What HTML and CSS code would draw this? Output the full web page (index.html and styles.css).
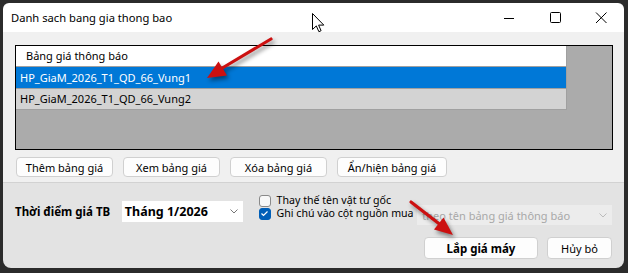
FILE: index.html
```html
<!DOCTYPE html>
<html lang="vi">
  <head>
    <meta charset="utf-8">
    <title>Danh sach bang gia thong bao</title>
    <link rel="stylesheet" href="styles.css">
  </head>
  <body>
    <div class="window">
      <header class="titlebar">
        <span class="title">Danh sach bang gia thong bao</span>
        <div class="controls">
          <span class="ctl">
            <svg width="12" height="12" viewBox="0 0 12 12"><path d="M1 6.5h10" stroke="#000" stroke-width="1"/></svg>
          </span>
          <span class="ctl">
            <svg width="12" height="12" viewBox="0 0 12 12"><rect x="1.5" y="0.5" width="10" height="10" rx="1" fill="none" stroke="#000" stroke-width="1"/></svg>
          </span>
          <span class="ctl">
            <svg width="12" height="12" viewBox="0 0 12 12"><path d="M1 0.5l10.5 10.5M11.5 0.5L1 11" stroke="#000" stroke-width="1"/></svg>
          </span>
        </div>
      </header>

      <section class="upper">
        <div class="list">
          <div class="row head">Bảng giá thông báo</div>
          <div class="row selected">HP_GiaM_2026_T1_QD_66_Vung1</div>
          <div class="row">HP_GiaM_2026_T1_QD_66_Vung2</div>
        </div>
        <div class="actions">
          <button class="btn w97">Thêm bảng giá</button>
          <button class="btn w97">Xem bảng giá</button>
          <button class="btn w97">Xóa bảng giá</button>
          <button class="btn w110">Ẩn/hiện bảng giá</button>
        </div>
      </section>

      <section class="lower">
        <div class="options">
          <span class="label">Thời điểm giá TB</span>
          <div class="select">
            <span>Tháng 1/2026</span>
            <svg width="8" height="5" viewBox="0 0 8 5"><path d="M0.5 0.5L4 4L7.5 0.5" fill="none" stroke="#777" stroke-width="1"/></svg>
          </div>
          <div class="checks">
            <div class="check"><span class="box"></span>Thay thế tên vật tư gốc</div>
            <div class="check"><span class="box on">
              <svg width="9" height="9" viewBox="0 0 9 9"><path d="M1.5 4.5L3.5 6.5L7.5 2.5" fill="none" stroke="#fff" stroke-width="1.2"/></svg>
            </span>Ghi chú vào cột nguồn mua</div>
          </div>
          <div class="combo">
            <span>theo tên bảng giá thông báo</span>
            <svg width="8" height="5" viewBox="0 0 8 5"><path d="M0.5 0.5L4 4L7.5 0.5" fill="none" stroke="#bbb" stroke-width="1"/></svg>
          </div>
        </div>
        <div class="footer-btns">
          <button class="btn big bold">Lắp giá máy</button>
          <button class="btn small">Hủy bỏ</button>
        </div>
      </section>
    </div>

    <!-- annotations drawn on top of the screenshot -->
    <svg class="overlay" width="628" height="273" viewBox="0 0 628 273">
      <g class="arrow">
        <path d="M271 39L219 70" stroke="#cc1010" stroke-width="3.2" stroke-linecap="round"/>
        <polygon points="207,78 218.5,61.5 227,75.5" fill="#cc1010"/>
        <path d="M411 202L442 226" stroke="#cc1010" stroke-width="3.2" stroke-linecap="round"/>
        <polygon points="453,235 434,229.5 443.5,217.5" fill="#cc1010"/>
      </g>
      <path class="cursor" d="M312.5 13.5v16l3.8-3.6 2.6 5.8 2.2-1-2.5-5.6h5.2z" fill="#fff" stroke="#000" stroke-width="1"/>
    </svg>
  </body>
</html>
```

FILE: styles.css
```css
html {
  font-family: "Noto Sans", "Open Sans", sans-serif;
  font-size: 11px;
}

body {
  margin: 0;
  width: 628px;
  height: 273px;
  background-color: #2b2b2b;
  position: relative;
  overflow: hidden;
}

.window {
  position: absolute;
  left: 3px;
  top: 3px;
  width: 621px;
  height: 265px;
  border-radius: 6px 6px 8px 8px;
  overflow: hidden;
  display: flex;
  flex-direction: column;
}

.titlebar {
  height: 29px;
  background-color: #fff;
  display: flex;
  align-items: center;
  justify-content: space-between;
}

.title {
  margin-left: 8px;
  color: #000;
  font-size: 11.2px;
}

.controls {
  display: flex;
  height: 100%;
}

.ctl {
  width: 46px;
  display: flex;
  align-items: center;
  justify-content: center;
}

.upper {
  background-color: #f0f0f0;
  height: 151px;
  padding: 13px 0 0 12px;
  box-sizing: border-box;
  border-bottom: 1px solid #d2d2d2;
}

.list {
  width: 598px;
  height: 105px;
  box-sizing: border-box;
  border: 1px solid #000;
  background-color: #ababab;
}

.row {
  width: 551px;
  height: 21px;
  box-sizing: border-box;
  border-bottom: 1px solid #a0a0a0;
  border-right: 1px solid #a0a0a0;
  background-color: #d3d3d3;
  padding-left: 4px;
  line-height: 20px;
  white-space: nowrap;
}

.row.head {
  height: 21px;
  background-color: #fff;
  padding-left: 10px;
}

.row.selected {
  height: 22px;
  background-color: #0078d7;
  color: #fff;
  line-height: 21px;
}

.actions {
  display: flex;
  gap: 10px;
  margin: 7px 0 0 1px;
}

.btn {
  font-family: inherit;
  font-size: 11px;
  height: 20px;
  padding: 0;
  background-color: #fdfdfd;
  border: 1px solid #d0d0d0;
  border-radius: 4px;
  color: #000;
}

.w97 { width: 97px; }
.w110 { width: 110px; }

.lower {
  flex: 1;
  background-color: #e3e3e3;
  padding: 11px 12px 0 12px;
}

.options {
  display: flex;
  align-items: flex-start;
  height: 31px;
}

.label {
  font-weight: bold;
  font-size: 11.5px;
  margin-top: 7px;
  line-height: 21px;
  width: 107px;
  white-space: nowrap;
}

.select {
  margin-top: 7px;
  width: 121px;
  height: 21px;
  box-sizing: border-box;
  background-color: #fff;
  display: flex;
  align-items: center;
  justify-content: space-between;
  padding: 0 5px 0 3px;
  font-weight: bold;
  font-size: 12.5px;
}

.checks {
  margin-left: 16px;
  width: 159px;
  display: flex;
  flex-direction: column;
  font-size: 10.6px;
}

.check {
  display: flex;
  align-items: center;
  height: 13px;
  line-height: 13px;
  white-space: nowrap;
}

.box {
  width: 12px;
  height: 12px;
  box-sizing: border-box;
  border: 1px solid #8a8a8a;
  border-radius: 3px;
  background-color: #f8f8f8;
  margin-right: 6px;
  display: flex;
  align-items: center;
  justify-content: center;
}

.box.on {
  background-color: #005fb8;
  border-color: #005fb8;
}

.combo {
  margin-top: 11px;
  width: 195px;
  height: 20px;
  box-sizing: border-box;
  background-color: #ececec;
  color: #a8a8a8;
  display: flex;
  align-items: center;
  justify-content: space-between;
  padding: 0 5px 0 5px;
}

.footer-btns {
  display: flex;
  justify-content: flex-end;
  gap: 9px;
  margin-top: 12px;
}

.btn.big {
  width: 114px;
  height: 22px;
  font-size: 11.5px;
}

.btn.small {
  width: 65px;
  height: 22px;
}

.bold {
  font-weight: bold;
}

.overlay {
  position: absolute;
  left: 0;
  top: 0;
  pointer-events: none;
}

.arrow {
  filter: drop-shadow(2px 3px 2px rgba(0, 0, 0, 0.45));
}
```
